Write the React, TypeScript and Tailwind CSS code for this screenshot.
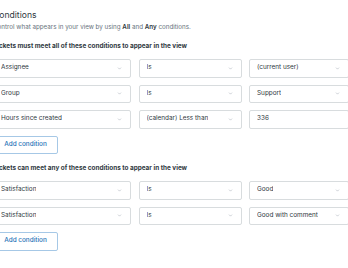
import { ChevronDown } from "lucide-react";

type Cond = { field: string; op: string; value: string; valueSelect: boolean };

const ALL: Cond[] = [
  { field: "Assignee", op: "Is", value: "(current user)", valueSelect: true },
  { field: "Group", op: "Is", value: "Support", valueSelect: true },
  { field: "Hours since created", op: "(calendar) Less than", value: "336", valueSelect: false },
];

const ANY: Cond[] = [
  { field: "Satisfaction", op: "Is", value: "Good", valueSelect: true },
  { field: "Satisfaction", op: "Is", value: "Good with comment", valueSelect: true },
];

function Box({ text, select, className }: { text: string; select: boolean; className: string }) {
  return (
    <div
      className={`h-[18.5px] shrink-0 flex items-center justify-between rounded-[2px] border border-[#d8dcde] bg-white pl-[7px] pr-[8px] text-[6.4px] text-[#2f3941] ${className}`}
    >
      <span className="truncate">{text}</span>
      {select && <ChevronDown size={5} strokeWidth={2} className="text-[#87929d] shrink-0" />}
    </div>
  );
}

function Row({ c }: { c: Cond }) {
  return (
    <div className="flex gap-[7.5px]">
      <Box text={c.field} select className="w-[138px]" />
      <Box text={c.op} select className="w-[103px]" />
      <Box text={c.value} select={c.valueSelect} className="w-[100px]" />
    </div>
  );
}

function Group({ title, rows }: { title: string; rows: Cond[] }) {
  return (
    <div className="flex flex-col">
      <div className="text-[6.4px] font-bold text-[#2f3941] leading-[10px]">{title}</div>
      <div className="mt-[8px] flex flex-col gap-[7px]">
        {rows.map((c, i) => (
          <Row key={i} c={c} />
        ))}
        <button className="h-[18.5px] w-[65px] rounded-[2px] border border-[#a6c8e6] text-[6.4px] font-medium text-[#1f73b7] text-center">
          Add condition
        </button>
      </div>
    </div>
  );
}

export default function App() {
  return (
    <div className="w-[348px] h-[268px] overflow-hidden bg-white" style={{ fontFamily: "Inter, 'Liberation Sans', sans-serif" }}>
      <div className="-ml-[7px] pt-[9px] flex flex-col">
        <div className="text-[8.6px] text-[#2f3941] leading-[12px]">Conditions</div>
        <div className="mt-[2px] text-[6.25px] text-[#68737d] leading-[9px]">
          Control what appears in your view by using <span className="font-semibold text-[#2f3941]">All</span> and{" "}
          <span className="font-semibold text-[#2f3941]">Any</span> conditions.
        </div>
        <div className="mt-[9px] flex flex-col gap-[9px]">
          <Group title="Tickets must meet all of these conditions to appear in the view" rows={ALL} />
          <Group title="Tickets can meet any of these conditions to appear in the view" rows={ANY} />
        </div>
      </div>
    </div>
  );
}
